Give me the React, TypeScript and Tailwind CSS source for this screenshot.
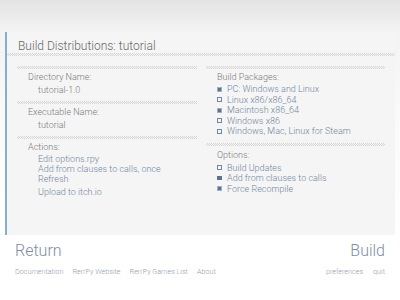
import React from "react";

const Hatch = () => (
  <div className="h-[3px] w-full bg-[conic-gradient(#d6d6d6_25%,transparent_0_50%,#d6d6d6_0_75%,transparent_0)] bg-[length:2px_2px]" />
);

type Box = "off" | "on" | "full";

const Check = ({ s }: { s: Box }) => {
  if (s === "off")
    return <span className="inline-block w-[5px] h-[5px] border border-[#7388a0] mr-[5px]" />;
  if (s === "on")
    return (
      <span className="inline-flex items-center justify-center w-[5px] h-[5px] border border-[#9fb0c2] mr-[5px]">
        <span className="w-[3px] h-[3px] bg-[#5b7390]" />
      </span>
    );
  return <span className="inline-block w-[5px] h-[4px] bg-[#5b7390] mr-[5px]" />;
};

const Item = ({ s, t }: { s: Box; t: string }) => (
  <div className="flex items-center h-[10.5px] leading-[10.5px] text-[#6f86a0]">
    <Check s={s} />
    <span>{t}</span>
  </div>
);

export default function App() {
  return (
    <div
      className="w-[400px] h-[300px] overflow-hidden bg-[linear-gradient(to_bottom,#e3e3e3_0px,#f3f3f3_30px,#fafafa_120px,#ffffff_240px)] text-[9px] font-light"
      style={{ fontFamily: "'Roboto Light', Roboto, 'Liberation Sans', sans-serif" }}
    >
      <div className="h-[32px]" />
      <div className="ml-[5px] w-[390px] h-[203px] border-l-2 border-[#86aecf] bg-[#f5f5f5]">
        <div className="pt-[7px] pl-[11px] text-[12px] leading-[14px] text-[#6a6a6a]">
          Build Distributions: tutorial
        </div>
        <Hatch />
        <div className="flex gap-[9px] mt-[10px] pl-[10px]">
          <div className="w-[180px] text-[#7a7a7a]">
            <Hatch />
            <div className="mt-[3px] pl-[11px] leading-[11px]">Directory Name:</div>
            <div className="mt-[2px] pl-[21px] leading-[11px]">tutorial-1.0</div>
            <div className="mt-[5px]"><Hatch /></div>
            <div className="mt-[3px] pl-[11px] leading-[11px]">Executable Name:</div>
            <div className="mt-[2px] pl-[21px] leading-[11px]">tutorial</div>
            <div className="mt-[5px]"><Hatch /></div>
            <div className="mt-[3px] pl-[11px] leading-[11px]">Actions:</div>
            <div className="mt-[1px] pl-[21px] leading-[10px] text-[#6f86a0]">
              <div>Edit options.rpy</div>
              <div>Add from clauses to calls, once</div>
              <div>Refresh</div>
              <div className="mt-[3px]">Upload to itch.io</div>
            </div>
          </div>
          <div className="w-[179px] text-[#7a7a7a]">
            <Hatch />
            <div className="mt-[3px] pl-[11px] leading-[11px]">Build Packages:</div>
            <div className="mt-[1px] pl-[11px]">
              <Item s="on" t="PC: Windows and Linux" />
              <Item s="off" t="Linux x86/x86_64" />
              <Item s="on" t="Macintosh x86_64" />
              <Item s="off" t="Windows x86" />
              <Item s="off" t="Windows, Mac, Linux for Steam" />
            </div>
            <div className="mt-[6px]"><Hatch /></div>
            <div className="mt-[4px] pl-[11px] leading-[11px]">Options:</div>
            <div className="mt-[2px] pl-[11px]">
              <Item s="off" t="Build Updates" />
              <Item s="full" t="Add from clauses to calls" />
              <Item s="on" t="Force Recompile" />
            </div>
          </div>
        </div>
      </div>
      <div className="mt-[7px] flex justify-between pl-[15px] pr-[15px] text-[16px] leading-[18px] text-[#7d8ea2]">
        <span>Return</span>
        <span>Build</span>
      </div>
      <div className="mt-[7px] flex justify-between pl-[15px] pr-[15px] text-[7.2px] leading-[10px] text-[#8f9eb0]">
        <div className="flex gap-[9px]">
          <span>Documentation</span>
          <span>Ren'Py Website</span>
          <span>Ren'Py Games List</span>
          <span>About</span>
        </div>
        <div className="flex gap-[10px]">
          <span>preferences</span>
          <span>quit</span>
        </div>
      </div>
    </div>
  );
}
